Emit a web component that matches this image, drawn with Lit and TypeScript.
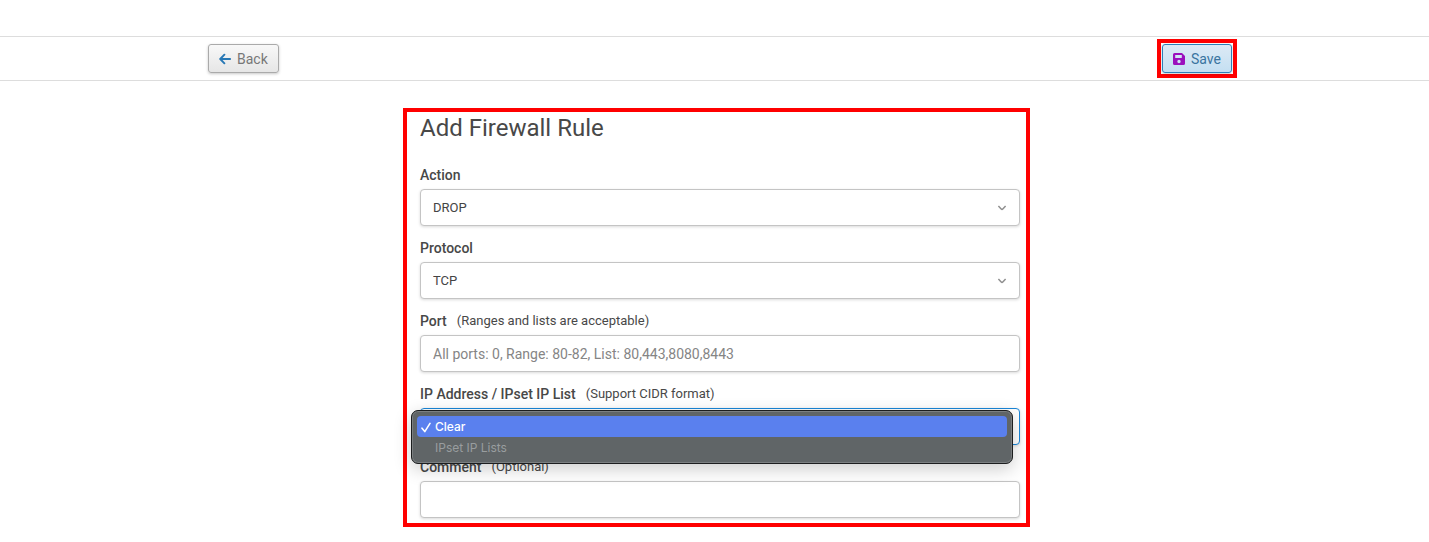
import { LitElement, html, css, svg } from "lit";
import { customElement, state } from "lit/decorators.js";

const chevron = html`<svg class="chevron" viewBox="0 0 10 6" aria-hidden="true">
  <path d="M1.4 1 L4.2 4 Q5 4.8 5.8 4 L8.6 1" fill="none" stroke="#909090" stroke-width="1.5" />
</svg>`;

@customElement("app-root")
export class AppRoot extends LitElement {
  @state() private ipSource = "Clear";

  static styles = css`
    :host {
      display: block;
      box-sizing: border-box;
      padding-top: 36px;
      background: #fff;
      color: #484848;
      font: 13px/20px Roboto, "Open Sans", sans-serif;
    }
    *,
    *::before,
    *::after {
      box-sizing: border-box;
    }
    .toolbar {
      border: solid #ddd;
      border-width: 1px 0;
      padding: 7px 0 7px 11px;
    }
    .toolbar-inner {
      display: flex;
      justify-content: space-between;
      max-width: 1024px;
      margin: 0 auto;
    }
    .button {
      display: inline-flex;
      align-items: center;
      gap: 6px;
      height: 29px;
      padding: 0 10px;
      border: 1px solid #aaa;
      border-radius: 3px;
      background: linear-gradient(#f8f8f8, #e6e6e6);
      box-shadow: 0 1px 3px rgba(0, 0, 0, 0.22);
      color: #777;
      font: 14px/20px Roboto, "Open Sans", sans-serif;
      text-decoration: none;
    }
    .button svg {
      width: 12px;
      height: 12px;
    }
    .button.save {
      border-color: #2c7fb8;
      background: linear-gradient(#dceaf5, #c4dff2);
      color: #3a74a0;
    }
    .marker {
      display: flex;
      border: 4px solid #f00;
      padding: 1px;
      margin: -5px;
    }
    main {
      padding: 27px 0 15px 4px;
    }
    .panel {
      max-width: 627px;
      margin: 0 auto;
      border: 4px solid #f00;
      padding: 0 6px 5px 13px;
    }
    h1 {
      margin: 0 0 21px;
      font-size: 24px;
      line-height: 32px;
      font-weight: 400;
    }
    form {
      display: grid;
      gap: 12px;
    }
    .caption {
      display: flex;
      gap: 10px;
      height: 20px;
      margin-bottom: 4px;
    }
    label {
      font-size: 14px;
      font-weight: 500;
    }
    .control {
      position: relative;
    }
    input,
    select {
      display: block;
      width: 100%;
      height: 37px;
      margin: 0;
      padding: 0 12px;
      border: 1px solid #c4c4c4;
      border-radius: 4px;
      outline: none;
      appearance: none;
      background: #fff;
      box-shadow: 0 1px 3px rgba(0, 0, 0, 0.15);
      color: #444;
      font: inherit;
    }
    input {
      font-size: 14px;
    }
    input::placeholder {
      color: #858585;
      opacity: 1;
    }
    input.focused {
      border-color: #1a86d8;
    }
    .chevron {
      position: absolute;
      right: 13px;
      top: 16px;
      width: 10px;
      height: 6px;
      pointer-events: none;
    }
    .menu {
      position: absolute;
      top: 2px;
      left: -9px;
      right: 7px;
      z-index: 1;
      margin: 0;
      padding: 5px;
      border: 1px solid #1c1e1f;
      border-radius: 7px;
      background: #606567;
      box-shadow: inset 0 0 0 1px #7b7f81, 0 5px 18px rgba(0, 0, 0, 0.2);
      list-style: none;
      font: 12px/21px Inter, sans-serif;
    }
    .option {
      display: flex;
      align-items: center;
      gap: 4px;
      height: 21px;
      padding-left: 4px;
      border-radius: 4px;
      color: #999d9f;
    }
    .option svg {
      width: 10px;
      height: 12px;
      visibility: hidden;
    }
    .option.chosen {
      background: #5a80ee;
      color: #fff;
      font-weight: 500;
    }
    .option.chosen svg {
      visibility: visible;
    }
  `;

  private renderOption(name: string) {
    const chosen = name === this.ipSource;
    return html`<li class="option ${chosen ? "chosen" : ""}" role="option" aria-selected=${chosen} aria-disabled=${!chosen}>
      <svg viewBox="0 0 10 12" aria-hidden="true">
        ${svg`<path d="M1 7.2 L3.8 10.6 L9 2.4" fill="none" stroke="#fff" stroke-width="1.6" stroke-linecap="round" stroke-linejoin="round" />`}
      </svg>
      ${name}
    </li>`;
  }

  render() {
    return html`
      <nav class="toolbar">
        <div class="toolbar-inner">
          <a class="button" href="#back">
            <svg viewBox="0 0 12 12" aria-hidden="true">
              <path d="M11.2 6 H1.4 M5.4 1.7 L1.2 6 L5.4 10.3" fill="none" stroke="#2878b5" stroke-width="1.9" stroke-linecap="round" stroke-linejoin="round" />
            </svg>
            Back
          </a>
          <div class="marker">
            <button class="button save" type="submit" form="rule">
              <svg viewBox="0 0 12 12" aria-hidden="true">
                <path fill="#9b10bd" fill-rule="evenodd" d="M1.6 0 H9 L12 3 V10.4 Q12 12 10.4 12 H1.6 Q0 12 0 10.4 V1.6 Q0 0 1.6 0 Z M2.2 2 V5 H8.8 V2 Z M6 6.8 A1.7 1.7 0 1 0 6 10.2 A1.7 1.7 0 1 0 6 6.8 Z" />
              </svg>
              Save
            </button>
          </div>
        </div>
      </nav>
      <main>
        <section class="panel">
          <h1>Add Firewall Rule</h1>
          <form id="rule" @submit=${(e: Event) => e.preventDefault()}>
            <div class="field">
              <div class="caption"><label for="action">Action</label></div>
              <div class="control">
                <select id="action"><option>DROP</option><option>ACCEPT</option></select>
                ${chevron}
              </div>
            </div>
            <div class="field">
              <div class="caption"><label for="protocol">Protocol</label></div>
              <div class="control">
                <select id="protocol"><option>TCP</option><option>UDP</option><option>ICMP</option></select>
                ${chevron}
              </div>
            </div>
            <div class="field">
              <div class="caption"><label for="port">Port</label><span>(Ranges and lists are acceptable)</span></div>
              <input id="port" type="text" placeholder="All ports: 0, Range: 80-82, List: 80,443,8080,8443" />
            </div>
            <div class="field">
              <div class="caption"><label for="ip">IP Address / IPset IP List</label><span>(Support CIDR format)</span></div>
              <div class="control">
                <input id="ip" class="focused" type="text" role="combobox" aria-expanded="true" aria-controls="ip-menu" />
                <ul id="ip-menu" class="menu" role="listbox">
                  ${["Clear", "IPset IP Lists"].map((name) => this.renderOption(name))}
                </ul>
              </div>
            </div>
            <div class="field">
              <div class="caption"><label for="comment">Comment</label><span>(Optional)</span></div>
              <input id="comment" type="text" />
            </div>
          </form>
        </section>
      </main>
    `;
  }
}
